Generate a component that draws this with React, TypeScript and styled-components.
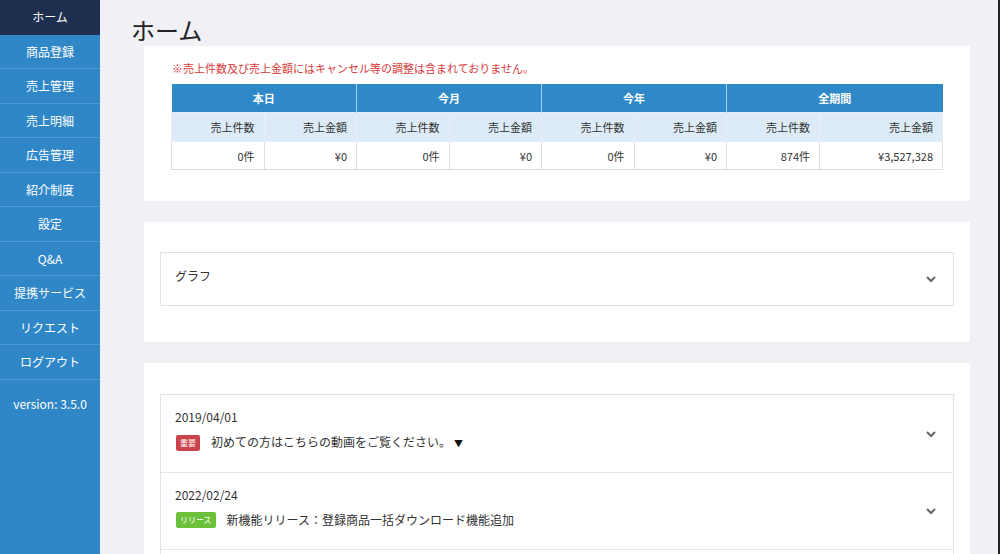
import React from "react";
import styled, { createGlobalStyle } from "styled-components";

const Global = createGlobalStyle`
  html, body { margin: 0; padding: 0; }
  body {
    font-family: "Noto Sans CJK JP", "Noto Sans", sans-serif;
    background: #f0f0f5;
    color: #333;
    width: 1000px;
    height: 554px;
    overflow: hidden;
  }
`;

const Layout = styled.div`
  display: flex;
  width: 1000px;
  height: 554px;
  overflow: hidden;
  border-right: 2px solid #222;
  box-sizing: border-box;
`;

const Sidebar = styled.nav`
  width: 100px;
  flex-shrink: 0;
  background: #3087c8;
  display: flex;
  flex-direction: column;
`;

const NavItem = styled.div<{ $active?: boolean }>`
  height: 34.5px;
  display: flex;
  align-items: center;
  justify-content: center;
  font-size: 12px;
  color: #fff;
  background: ${(p) => (p.$active ? "#1e2f4f" : "transparent")};
  border-bottom: 1px solid ${(p) => (p.$active ? "#1e2f4f" : "#4e9bd4")};
  box-sizing: border-box;
`;

const Version = styled.div`
  height: 48px;
  display: flex;
  align-items: center;
  justify-content: center;
  font-size: 12px;
  color: #fff;
`;

const Main = styled.main`
  flex: 1;
  padding: 0 28px 0 44px;
  display: flex;
  flex-direction: column;
  gap: 21px;
`;

const Title = styled.h1`
  margin: 14px 0 -21px -13px;
  font-size: 24px;
  font-weight: 400;
  color: #222;
  line-height: 32px;
`;

const Card = styled.section<{ $pad: string; $grow?: boolean }>`
  background: #fff;
  padding: ${(p) => p.$pad};
  box-sizing: border-box;
  flex: ${(p) => (p.$grow ? 1 : "none")};
`;

const Note = styled.p`
  margin: 0 0 8px 1px;
  font-size: 11px;
  color: #d9393b;
  line-height: 16px;
`;

const Table = styled.table`
  width: 772px;
  border-collapse: collapse;
  font-size: 11px;
  table-layout: fixed;
`;

const GroupTh = styled.th`
  background: #2f89c9;
  color: #fff;
  font-weight: 700;
  height: 28px;
  border-right: 1px solid #a9cfee;
  padding: 0;
  &:last-child { border-right: none; }
`;

const SubTh = styled.th`
  background: #dcebf7;
  color: #333;
  font-weight: 400;
  height: 28px;
  text-align: right;
  padding: 0 9px;
  border: 1px solid #e6eef6;
`;

const Td = styled.td`
  height: 27px;
  text-align: right;
  padding: 0 9px;
  border: 1px solid #dcdcdc;
  color: #333;
`;

const Panel = styled.div`
  border: 1px solid #e2e2e2;
  background: #fff;
`;

const PanelRow = styled.div<{ $h: number }>`
  height: ${(p) => p.$h}px;
  display: flex;
  align-items: center;
  padding: 0 14px;
  border-bottom: 1px solid #e6e6e6;
  box-sizing: border-box;
  &:last-child { border-bottom: none; }
`;

const PanelBody = styled.div<{ $top?: number }>`
  flex: 1;
  align-self: stretch;
  display: flex;
  flex-direction: column;
  justify-content: ${(p) => (p.$top !== undefined ? "flex-start" : "center")};
  padding-top: ${(p) => p.$top ?? 0}px;
  gap: 8px;
  font-size: 12px;
  color: #333;
`;

const GraphLabel = styled.div`
  font-size: 12px;
  color: #333;
  margin-top: -8px;
`;

const DateText = styled.div`
  font-size: 12px;
  line-height: 16px;
  color: #333;
`;

const NewsLine = styled.div`
  display: flex;
  align-items: center;
  gap: 11px;
  font-size: 12px;
  line-height: 17px;
`;

const Arrow = styled.span`
  font-size: 9px;
  margin-left: 3px;
  color: #111;
`;

const Badge = styled.span<{ $color: string }>`
  display: inline-flex;
  align-items: center;
  justify-content: center;
  background: ${(p) => p.$color};
  color: #fff;
  font-size: 8px;
  height: 16px;
  padding: 0 4px;
  border-radius: 2px;
  margin-left: 1px;
`;

const Chevron = () => (
  <svg width="12" height="8" viewBox="0 0 12 8" style={{ flexShrink: 0, marginRight: 2 }}>
    <path d="M2 2 L6 6 L10 2" fill="none" stroke="#666" strokeWidth="2" />
  </svg>
);

const navItems = [
  "商品登録",
  "売上管理",
  "売上明細",
  "広告管理",
  "紹介制度",
  "設定",
  "Q&A",
  "提携サービス",
  "リクエスト",
  "ログアウト",
];

const groups = ["本日", "今月", "今年", "全期間"];
const values = [
  ["0件", "¥0"],
  ["0件", "¥0"],
  ["0件", "¥0"],
  ["874件", "¥3,527,328"],
];

export default function App() {
  return (
    <>
      <Global />
      <Layout>
        <Sidebar>
          <NavItem $active>ホーム</NavItem>
          {navItems.map((n) => (
            <NavItem key={n}>{n}</NavItem>
          ))}
          <Version>version: 3.5.0</Version>
        </Sidebar>
        <Main>
          <Title>ホーム</Title>
          <Card $pad="14px 27px 31px 27px">
            <Note>※売上件数及び売上金額にはキャンセル等の調整は含まれておりません。</Note>
            <Table>
              <colgroup>
                {Array.from({ length: 8 }).map((_, i) => (
                  <col key={i} style={{ width: i === 7 ? 123 : i === 6 ? 93 : 92.5 }} />
                ))}
              </colgroup>
              <thead>
                <tr>
                  {groups.map((g) => (
                    <GroupTh key={g} colSpan={2}>
                      {g}
                    </GroupTh>
                  ))}
                </tr>
                <tr>
                  {groups.map((g) => (
                    <React.Fragment key={g}>
                      <SubTh>売上件数</SubTh>
                      <SubTh>売上金額</SubTh>
                    </React.Fragment>
                  ))}
                </tr>
              </thead>
              <tbody>
                <tr>
                  {values.map((v, i) => (
                    <React.Fragment key={i}>
                      <Td>{v[0]}</Td>
                      <Td>{v[1]}</Td>
                    </React.Fragment>
                  ))}
                </tr>
              </tbody>
            </Table>
          </Card>
          <Card $pad="30px 16px 36px 16px">
            <Panel>
              <PanelRow $h={52}>
                <PanelBody>
                  <GraphLabel>グラフ</GraphLabel>
                </PanelBody>
                <Chevron />
              </PanelRow>
            </Panel>
          </Card>
          <Card $pad="31px 16px 0 16px" $grow>
            <Panel>
              <PanelRow $h={78}>
                <PanelBody $top={14}>
                  <DateText>2019/04/01</DateText>
                  <NewsLine>
                    <Badge $color="#c9434b">重要</Badge>
                    <span>
                      初めての方はこちらの動画をご覧ください。<Arrow>▼</Arrow>
                    </span>
                  </NewsLine>
                </PanelBody>
                <Chevron />
              </PanelRow>
              <PanelRow $h={77}>
                <PanelBody $top={14}>
                  <DateText>2022/02/24</DateText>
                  <NewsLine>
                    <Badge $color="#6cc13a">リリース</Badge>
                    <span>新機能リリース：登録商品一括ダウンロード機能追加</span>
                  </NewsLine>
                </PanelBody>
                <Chevron />
              </PanelRow>
              <PanelRow $h={40}>
                <PanelBody />
              </PanelRow>
            </Panel>
          </Card>
        </Main>
      </Layout>
    </>
  );
}
